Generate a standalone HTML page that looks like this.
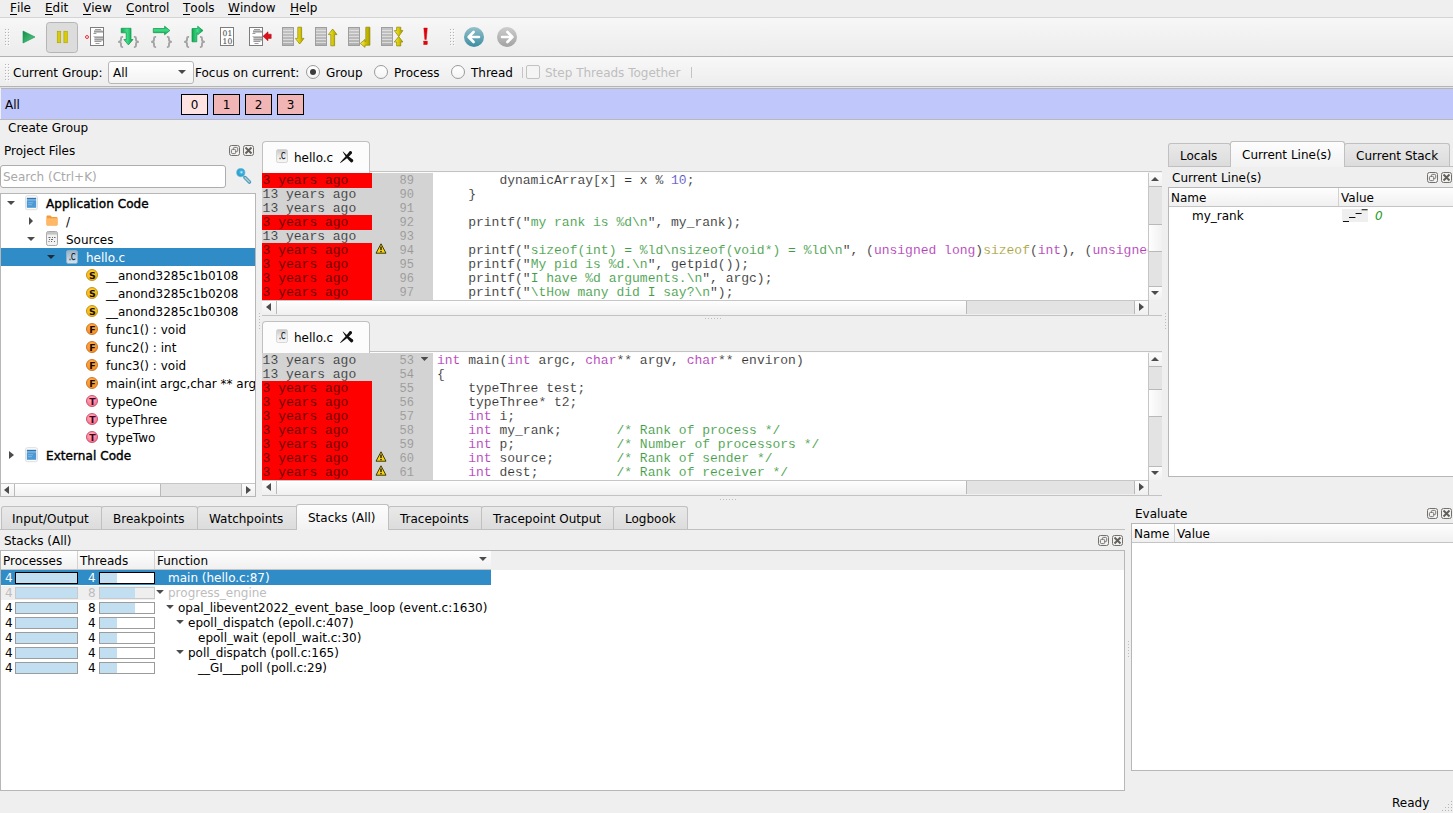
<!DOCTYPE html>
<html lang="en">
<head>
<meta charset="utf-8">
<title>DDT - hello.c</title>
<style>
*{box-sizing:border-box;margin:0;padding:0}
html,body{width:1453px;height:813px;overflow:hidden}
body{position:relative;background:#efefef;color:#000;font:12px "DejaVu Sans","Liberation Sans",sans-serif;-webkit-font-smoothing:antialiased}
.a{position:absolute;white-space:nowrap}
.t{position:absolute;white-space:nowrap;line-height:16px;height:16px}
u{text-decoration:none;border-bottom:1px solid #000;display:inline-block;line-height:12px;height:13px}
/* top bars */
#menubar{left:0;top:0;width:1453px;height:17px;background:#efefef}
#menuline{left:0;top:17px;width:1453px;height:1px;background:#d4d4d4}
#tb1{left:0;top:18px;width:1453px;height:38px;background:linear-gradient(#f7f7f7,#ececec)}
#tb1line{left:0;top:56px;width:1453px;height:1px;background:#b2b2b2}
#tb2{left:0;top:57px;width:1453px;height:29px;background:linear-gradient(#f8f8f8,#ededed)}
#tb2line{left:0;top:86px;width:1453px;height:2px;background:linear-gradient(#b4b4b4 1px,#e2e2e2 1px)}
.grip{position:absolute;width:5px;height:17px;background-image:radial-gradient(circle at 0.5px 0.5px,#b4b4b4 0.6px,transparent 0.7px),radial-gradient(circle at 1.5px 1.5px,#fff 0.6px,transparent 0.7px);background-size:3px 3px}
.icon{position:absolute;overflow:visible}
.radio{position:absolute;width:14px;height:14px;border-radius:50%;border:1px solid #9a9a9a;background:linear-gradient(#fff,#f4f4f4)}
.radio.on::after{content:"";position:absolute;left:3px;top:3px;width:6px;height:6px;border-radius:50%;background:#3c3c3c}
/* group row */
#grouprow{left:1px;top:88px;width:1452px;height:31px;background:#c0c8fb;border-top:1px solid #b4b4b0}
#grouprowline{left:0;top:119px;width:1453px;height:1px;background:#b9b9b9}
.pbox{position:absolute;top:94px;width:27px;height:21px;border:1px solid #000;background:#f2b5b5;text-align:center;line-height:21px;font-size:12px}

/* docks */
.dbtn{position:absolute;width:11px;height:11px;border:1px solid #74716d;border-radius:2.5px;background:#f1f1f1}
.frame{position:absolute;background:#fff;border:1px solid #b7b7b7}
.hdr{position:absolute;height:17px;background:linear-gradient(#fefefe,#f0f0f0);border-bottom:1px solid #c4c4c4}
.hsep{position:absolute;width:1px;background:#d2d2d2}
.sel{position:absolute;background:#308cc6}
.tri-d{position:absolute;width:0;height:0;border-left:4px solid transparent;border-right:4px solid transparent;border-top:4px solid #4b4b4b}
.tri-r{position:absolute;width:0;height:0;border-top:4px solid transparent;border-bottom:4px solid transparent;border-left:5px solid #4b4b4b}
.tri-l{position:absolute;width:0;height:0;border-top:4px solid transparent;border-bottom:4px solid transparent;border-right:5px solid #4b4b4b}
.tri-u{position:absolute;width:0;height:0;border-left:4px solid transparent;border-right:4px solid transparent;border-bottom:4px solid #4b4b4b}
.ad7{position:absolute;width:7.8px;height:4.1px;background:#4b4b4b;clip-path:polygon(0 0,100% 0,50% 100%)}
.fb{-webkit-text-stroke:0.4px #000;letter-spacing:0.07px}
.sym{position:absolute;width:12px;height:12px;border-radius:50%;font:bold 9px "DejaVu Sans","Liberation Sans",sans-serif;text-align:center;line-height:11.6px;color:#1c1000}
.sS{background:radial-gradient(circle at 40% 35%,#ffd84a,#eeb21a);border:1px solid #b98a10}
.sF{background:radial-gradient(circle at 40% 35%,#ffb45a,#f58c22);border:1px solid #c4691a}
.sT{background:radial-gradient(circle at 40% 35%,#ff9cb4,#f0708e);border:1px solid #c0405e}
/* scrollbars */
.sb{position:absolute;background:#e3e3e3}
.sbtn{position:absolute;background:linear-gradient(#fcfcfc,#f0f0f0)}
.sbh{position:absolute;background:linear-gradient(#fefefe,#f1f1f1)}
.sbv{position:absolute;background:linear-gradient(90deg,#fefefe,#f1f1f1)}
/* tabs */
.tab{position:absolute;border:1px solid #c0c0c0;border-bottom:none;border-radius:3px 3px 0 0;background:linear-gradient(#e9e9e9,#dcdcdc)}
.tab.on{background:linear-gradient(#fdfdfd,#f2f2f2)}
.etab{position:absolute;border:1px solid #c0c0c0;border-bottom:none;border-radius:4px 4px 0 0;background:#fcfcfc}
/* code */
.code{position:absolute;white-space:pre;font:13px "Liberation Mono",monospace;line-height:14px;height:14px;color:#333}
.red{position:absolute;left:262px;width:110px;height:15px;background:#ff0000}
.ann{left:262.6px;color:#3c3c3c;-webkit-text-stroke:0.1px #d3d3d3}
.annr{left:262.6px;color:#5a0000;-webkit-text-stroke:0.1px #ff0000}
.ln{left:384px;width:30px;text-align:right;font-size:12px;color:#989898;-webkit-text-stroke:0.1px #d3d3d3}
.src{left:437px;-webkit-text-stroke:0.1px #fff}
.k{color:#b23ab8}.s{color:#3f9d46}.c{color:#3f9d46}.n{color:#5a55c8}.z{color:#a8a23a}
</style>
</head>
<body>
<!-- ===== menu bar ===== -->
<div class="a" id="menubar"></div>
<div class="a" id="menuline"></div>
<div class="t" style="left:10px;top:0px"><u>F</u>ile</div>
<div class="t" style="left:45px;top:0px"><u>E</u>dit</div>
<div class="t" style="left:83px;top:0px"><u>V</u>iew</div>
<div class="t" style="left:126px;top:0px"><u>C</u>ontrol</div>
<div class="t" style="left:183px;top:0px"><u>T</u>ools</div>
<div class="t" style="left:228px;top:0px"><u>W</u>indow</div>
<div class="t" style="left:290px;top:0px"><u>H</u>elp</div>

<!-- ===== toolbar 1 ===== -->
<div class="a" id="tb1"></div>
<div class="a" id="tb1line"></div>
<div class="grip" style="left:5px;top:29px"></div>
<div class="grip" style="left:450px;top:29px"></div>


<svg class="icon" style="left:0;top:18px" width="540" height="38" viewBox="0 18 540 38">
<defs>
<linearGradient id="gG" x1="0" y1="0" x2="1" y2="1"><stop offset="0" stop-color="#0f8f45"/><stop offset="1" stop-color="#5fcf8f"/></linearGradient>
<linearGradient id="gG2" x1="0" y1="0" x2="1" y2="0"><stop offset="0" stop-color="#3fc27a"/><stop offset="1" stop-color="#0f8a42"/></linearGradient>
<linearGradient id="gG3" x1="0" y1="0" x2="1" y2="0"><stop offset="0" stop-color="#12a650"/><stop offset="0.5" stop-color="#3fdc8a"/><stop offset="1" stop-color="#0c9c48"/></linearGradient>
<linearGradient id="gG4" x1="0" y1="0" x2="0" y2="1"><stop offset="0" stop-color="#12a650"/><stop offset="0.45" stop-color="#3fdc8a"/><stop offset="1" stop-color="#0c9c48"/></linearGradient>
<linearGradient id="gY" x1="0" y1="0" x2="1" y2="0"><stop offset="0" stop-color="#f4ec62"/><stop offset="0.45" stop-color="#dace08"/><stop offset="1" stop-color="#a89c00"/></linearGradient>
<linearGradient id="gL" x1="0" y1="0" x2="0" y2="1"><stop offset="0" stop-color="#c6c6c6"/><stop offset="1" stop-color="#b0b0b0"/></linearGradient>
<linearGradient id="gB" x1="0" y1="0" x2="0" y2="1"><stop offset="0" stop-color="#94c0ca"/><stop offset="1" stop-color="#3a8da2"/></linearGradient>
<linearGradient id="gGr" x1="0" y1="0" x2="0" y2="1"><stop offset="0" stop-color="#cdcdcd"/><stop offset="1" stop-color="#a2a2a2"/></linearGradient>
<linearGradient id="gCi" x1="0" y1="0" x2="0" y2="1"><stop offset="0" stop-color="#c6c6c6"/><stop offset="0.55" stop-color="#ececec"/><stop offset="1" stop-color="#f8f8f8"/></linearGradient>
<linearGradient id="gCs" x1="0" y1="0" x2="0" y2="1"><stop offset="0" stop-color="#98b2c6"/><stop offset="1" stop-color="#d2e5f3"/></linearGradient>
<radialGradient id="gS" cx="0.45" cy="0.35" r="0.7"><stop offset="0" stop-color="#ffd23e"/><stop offset="1" stop-color="#f0ae08"/></radialGradient>
<radialGradient id="gF" cx="0.45" cy="0.35" r="0.7"><stop offset="0" stop-color="#ffb052"/><stop offset="1" stop-color="#f88a1c"/></radialGradient>
<radialGradient id="gT" cx="0.45" cy="0.35" r="0.7"><stop offset="0" stop-color="#ffb4c4"/><stop offset="1" stop-color="#f4688a"/></radialGradient>
<g id="doc"><rect x="0.5" y="0.5" width="13" height="18" fill="#fff" stroke="#7d7d7d"/><path d="M5 2.5h6M4 4.5h9M3.4 6.5h3M4.4 10.5h8.6M4.4 12.5h8.6M4.4 14.5h7M5.5 16.5h4" stroke="#9c9c9c" stroke-width="1" fill="none"/><path d="M4 3.5h8.4M4 5.5h9M3.4 9.5h9.6M4.4 11.5h8.6M4.4 13.5h8.6" stroke="#c4c4c4" stroke-width="1" fill="none"/></g>
<g id="list"><rect x="0.5" y="0.5" width="11" height="18" fill="url(#gL)" stroke="#9e9e9e"/><path d="M1 3.5h10M1 6.5h10M1 9.5h10M1 12.5h10M1 15.5h10" stroke="#e6e6e6" stroke-width="0.8"/></g>
<g id="brL"><path d="M5.1 0.9H4.4C3.3 0.9 3 1.5 3 2.4V4.1C3 5.1 2.4 5.7 0.2 5.9C2.4 6.1 3 6.7 3 7.7V9.6C3 10.5 3.3 11.1 4.4 11.1H5.1" fill="none" stroke="#a4a4a4" stroke-width="1.9" stroke-linejoin="miter" stroke-miterlimit="6"/></g>
<g id="brR"><path d="M-0.3 0.9H0.4C1.5 0.9 1.8 1.5 1.8 2.4V4.1C1.8 5.1 2.4 5.7 4.6 5.9C2.4 6.1 1.8 6.7 1.8 7.7V9.6C1.8 10.5 1.5 11.1 0.4 11.1H-0.3" fill="none" stroke="#a4a4a4" stroke-width="1.9" stroke-linejoin="miter" stroke-miterlimit="6"/></g>
</defs>
<!-- play -->
<path d="M23 31L35 37L23 43Z" fill="url(#gG)" stroke="#14904a" stroke-width="0.6"/>
<!-- pause (pressed) -->
<rect x="46.5" y="22.5" width="31" height="30" rx="3" fill="#dcdcdc" stroke="#b5b5b5"/>
<rect x="57.3" y="31.3" width="3.4" height="11.4" fill="#d8cc0a" stroke="#b4a800" stroke-width="0.7"/>
<rect x="63.9" y="31.3" width="3.4" height="11.4" fill="#d8cc0a" stroke="#b4a800" stroke-width="0.7"/>
<!-- run to line -->
<use href="#doc" x="90" y="27"/>
<circle cx="87" cy="37" r="1.5" fill="#ffe6e6" stroke="#e8202a" stroke-width="0.9"/>
<!-- step into -->
<use href="#brL" x="118" y="36"/><use href="#brR" x="134.2" y="36"/>
<path d="M121.2 28.3H131V39.5H133L128.4 44.9L123.9 39.5H126.2V32.8H121.2Z" fill="url(#gG3)" stroke="#0a9646" stroke-width="0.7" stroke-linejoin="round"/>
<!-- step over -->
<use href="#brL" x="151" y="36"/><use href="#brR" x="167.2" y="36"/>
<path d="M153.3 28.5H164.6V26.2L169.9 30.5L164.6 34.8V32.7H153.3Z" fill="url(#gG4)" stroke="#0a9646" stroke-width="0.7" stroke-linejoin="round"/>
<!-- step out -->
<use href="#brL" x="184" y="36"/><use href="#brR" x="200.2" y="36"/>
<path d="M192 41.8V28.5H197.7V26.2L203 30.5L197.7 34.8V32.8H196.8V41.8Z" fill="url(#gG3)" stroke="#0a9646" stroke-width="0.7" stroke-linejoin="round"/>
<!-- binary -->
<rect x="220.5" y="27.5" width="13" height="18" fill="#fff" stroke="#7d7d7d"/>
<text x="227.4" y="35.7" font-family="DejaVu Serif,Liberation Serif,serif" font-size="7.6" fill="#5c5c5c" stroke="#5c5c5c" stroke-width="0.15" text-anchor="middle">01</text>
<text x="227.4" y="43.8" font-family="DejaVu Serif,Liberation Serif,serif" font-size="7.6" fill="#5c5c5c" stroke="#5c5c5c" stroke-width="0.15" text-anchor="middle">10</text>
<!-- doc + red arrow -->
<use href="#doc" x="249" y="27"/>
<path d="M263 36.3L268 31.8V34.2H271.2V38.4H268V40.8Z" fill="#e0101a" stroke="#a60008" stroke-width="0.5"/>
<!-- stack down -->
<use href="#list" x="282" y="27"/>
<path d="M297.8 27.2H301.6V38.4H304L299.7 44L295.3 38.4H297.8Z" fill="url(#gY)" stroke="#8f8400" stroke-width="0.7"/>
<!-- stack up -->
<use href="#list" x="315" y="27"/>
<path d="M330.8 45.8H334.6V34.6H337L332.7 29L328.3 34.6H330.8Z" fill="url(#gY)" stroke="#8f8400" stroke-width="0.7"/>
<!-- stack return -->
<use href="#list" x="348" y="27"/>
<path d="M365.8 27.2H369.9V45.2H365V47.4L360.3 43.4L365 39.4V41.6H365.8Z" fill="url(#gY)" stroke="#8f8400" stroke-width="0.7"/>
<!-- stack in/out -->
<use href="#list" x="381" y="27"/>
<path d="M396.6 27.2H400.8V30.6H402.9L398.7 36.5L394.3 30.6H396.6Z" fill="url(#gY)" stroke="#8f8400" stroke-width="0.7"/>
<path d="M396.6 45.9H400.8V42H402.9L398.7 36.5L394.3 42H396.6Z" fill="url(#gY)" stroke="#8f8400" stroke-width="0.7"/>
<!-- bang -->
<path d="M423.8 28H427.3L426.3 39.6H424.8Z" fill="#e60008" stroke="#c00006" stroke-width="0.4"/><rect x="423.8" y="41.1" width="3.5" height="3.5" fill="#e60008" stroke="#c00006" stroke-width="0.4"/>
<!-- back / forward -->
<circle cx="474" cy="37" r="10" fill="url(#gB)"/>
<path d="M469 37H479M473.6 32L468.6 37L473.6 42" fill="none" stroke="#fff" stroke-width="2.6" stroke-linecap="round" stroke-linejoin="round"/>
<circle cx="507" cy="37" r="10" fill="url(#gGr)"/>
<path d="M502 37H512M507.4 32L512.4 37L507.4 42" fill="none" stroke="#fff" stroke-width="2.6" stroke-linecap="round" stroke-linejoin="round"/>
</svg>

<!-- ===== toolbar 2 ===== -->
<div class="a" id="tb2"></div>
<div class="a" id="tb2line"></div>
<div class="grip" style="left:5px;top:64px"></div>
<div class="t" style="left:13px;top:65px">Current Group:</div>
<div class="a" style="left:108px;top:61px;width:86px;height:23px;border:1px solid #b6b6b6;border-radius:3px;background:linear-gradient(#fff,#f3f3f3)"></div>
<div class="t" style="left:113px;top:65px">All</div>
<div class="a" style="left:178px;top:70px;width:0;height:0;border-left:4px solid transparent;border-right:4px solid transparent;border-top:4px solid #4a4a4a"></div>
<div class="t" style="left:195px;top:65px">Focus on current:</div>
<div class="radio on" style="left:306px;top:65px"></div>
<div class="t" style="left:326px;top:65px">Group</div>
<div class="radio" style="left:374px;top:65px"></div>
<div class="t" style="left:394px;top:65px">Process</div>
<div class="radio" style="left:451px;top:65px"></div>
<div class="t" style="left:471px;top:65px">Thread</div>
<div class="a" style="left:522px;top:67px;width:1px;height:11px;background:#c4c4c4"></div>
<div class="a" style="left:526px;top:65px;width:14px;height:14px;border:1px solid #c2c2c2;border-radius:2px;background:#f4f4f4"></div>
<div class="t" style="left:545px;top:65px;color:#bebebe">Step Threads Together</div>
<div class="a" style="left:691px;top:67px;width:1px;height:11px;background:#c4c4c4"></div>

<!-- ===== group row ===== -->
<div class="a" id="grouprow"></div>
<div class="a" id="grouprowline"></div>
<div class="t" style="left:5px;top:97px">All</div>
<div class="pbox" style="left:181px;background:#ffe3e3">0</div>
<div class="pbox" style="left:213px">1</div>
<div class="pbox" style="left:245px">2</div>
<div class="pbox" style="left:277px">3</div>
<div class="t" style="left:8px;top:120px">Create Group</div>

<!-- ===== Project Files ===== -->
<div class="t" style="left:4px;top:143px">Project Files</div>
<div class="dbtn" style="left:229px;top:145px"></div><div class="dbtn" style="left:243px;top:145px"></div>
<svg class="icon" style="left:229px;top:145px" width="25" height="11" viewBox="0 0 25 11"><rect x="4.4" y="2.4" width="4.3" height="4.2" rx="1.1" fill="none" stroke="#6a6764" stroke-width="0.9"/><rect x="2.4" y="4.4" width="4.3" height="4.2" rx="1.1" fill="#f1f1f1" stroke="#6a6764" stroke-width="0.9"/><path d="M16.5 2.5L22.5 8.5M22.5 2.5L16.5 8.5" stroke="#625f5b" stroke-width="1.9"/></svg>
<div class="a" style="left:0px;top:165px;width:226px;height:23px;border:1px solid #adadad;border-radius:3px;background:#fff"></div>
<div class="t" style="left:3px;top:169px;color:#a9a9a9">Search (Ctrl+K)</div>
<svg class="icon" style="left:235px;top:168px" width="17" height="17" viewBox="0 0 17 17"><defs><radialGradient id="lens" cx="0.58" cy="0.45" r="0.6"><stop offset="0" stop-color="#d8f2fc"/><stop offset="0.35" stop-color="#3fb0dc"/><stop offset="1" stop-color="#1f98c8"/></radialGradient></defs><path d="M8.2 7.6L10 9.4" stroke="#7fc0dc" stroke-width="1.4"/><path d="M10 9.6L14.4 14" stroke="#3f9fc6" stroke-width="3.6" stroke-linecap="round"/><path d="M10.2 9.8L14.2 13.8" stroke="#c9c4c4" stroke-width="1.6" stroke-linecap="round"/><circle cx="5.8" cy="4.6" r="4.1" fill="url(#lens)" stroke="#5fb4d8" stroke-width="0.7"/></svg>
<div class="frame" style="left:0;top:193px;width:256px;height:304px"></div>
<div class="tri-d" style="left:7px;top:201px"></div>
<svg class="icon" style="left:25.4px;top:195.3px" width="13" height="15.4" viewBox="0 0 13 15"><rect x="0.5" y="0.5" width="12" height="14" rx="2" fill="#fdfdfd" stroke="#dedede"/><rect x="1.8" y="2.6" width="9.4" height="1.8" fill="#2a78b6"/><rect x="1.8" y="5" width="9.4" height="7.6" fill="#4e98d4"/><path d="M3 7.5h5M3 9.5h4" stroke="#7bb8ea" stroke-width="1"/></svg>
<div class="t fb" style="left:46px;top:196px">Application Code</div>
<div class="tri-r" style="left:29px;top:217px;border-left-width:4.3px"></div>
<svg class="icon" style="left:46px;top:215px" width="12" height="11" viewBox="0 0 12 11"><path d="M0.5 1.5Q0.5 0.5 1.5 0.5H4.5L6 2H10.5Q11.5 2 11.5 3V9.5Q11.5 10.5 10.5 10.5H1.5Q0.5 10.5 0.5 9.5Z" fill="#f59a3a"/><path d="M0.5 4Q0.5 3.2 1.5 3.2H10.5Q11.5 3.2 11.5 4V9.5Q11.5 10.5 10.5 10.5H1.5Q0.5 10.5 0.5 9.5Z" fill="#ffb866"/></svg>
<div class="t" style="left:66px;top:214px">/</div>
<div class="tri-d" style="left:27px;top:237px"></div>
<svg class="icon" style="left:46px;top:231px" width="12" height="15" viewBox="0 0 12 15"><rect x="0.5" y="0.5" width="11" height="14" rx="1.8" fill="#f2f2f2" stroke="#a8a8a8"/><rect x="1" y="1" width="10" height="2.6" fill="#c4c4c4"/><path d="M2.5 6.5h2M6 6.5h1M8 6.5h1.5M3 8.5h1M5 8.5h2M2.5 10.5h1M5 10.5h1M8 10.5h1" stroke="#6a6a6a" stroke-width="1"/></svg>
<div class="t" style="left:66px;top:232px">Sources</div>
<div class="sel" style="left:1px;top:248px;width:254px;height:18px"></div>
<div class="tri-d" style="left:47px;top:255px;border-top-color:#1d2c38"></div>
<svg class="icon" style="left:66px;top:250px" width="12" height="14" viewBox="0 0 12 14"><rect x="0.5" y="0.5" width="11" height="13" rx="1.8" fill="url(#gCs)" stroke="#8fb0c8"/><text x="2.9" y="10.1" font-family="DejaVu Sans,Liberation Sans,sans-serif" font-size="9" fill="#111" stroke="#111" stroke-width="0.25" textLength="6.4" lengthAdjust="spacingAndGlyphs">.C</text></svg>
<div class="t" style="left:86px;top:250px;color:#fff">hello.c</div>
<svg class="icon" style="left:86px;top:269px" width="12" height="12" viewBox="0 0 12 12"><circle cx="6" cy="6" r="5.55" fill="url(#gS)" stroke="#b88608" stroke-width="0.8"/><text x="6.45" y="9.65" text-anchor="middle" font-family="DejaVu Sans,Liberation Sans,sans-serif" font-weight="bold" font-size="9.4" fill="#1a1000">S</text></svg>
<div class="t" style="left:106px;top:268px">__anond3285c1b0108</div>
<svg class="icon" style="left:86px;top:287px" width="12" height="12" viewBox="0 0 12 12"><circle cx="6" cy="6" r="5.55" fill="url(#gS)" stroke="#b88608" stroke-width="0.8"/><text x="6.45" y="9.65" text-anchor="middle" font-family="DejaVu Sans,Liberation Sans,sans-serif" font-weight="bold" font-size="9.4" fill="#1a1000">S</text></svg>
<div class="t" style="left:106px;top:286px">__anond3285c1b0208</div>
<svg class="icon" style="left:86px;top:305px" width="12" height="12" viewBox="0 0 12 12"><circle cx="6" cy="6" r="5.55" fill="url(#gS)" stroke="#b88608" stroke-width="0.8"/><text x="6.45" y="9.65" text-anchor="middle" font-family="DejaVu Sans,Liberation Sans,sans-serif" font-weight="bold" font-size="9.4" fill="#1a1000">S</text></svg>
<div class="t" style="left:106px;top:304px">__anond3285c1b0308</div>
<svg class="icon" style="left:86px;top:323px" width="12" height="12" viewBox="0 0 12 12"><circle cx="6" cy="6" r="5.55" fill="url(#gF)" stroke="#c06a18" stroke-width="0.8"/><text x="6.45" y="9.65" text-anchor="middle" font-family="DejaVu Sans,Liberation Sans,sans-serif" font-weight="bold" font-size="9.4" fill="#1a0c00">F</text></svg>
<div class="t" style="left:106px;top:322px">func1() : void</div>
<svg class="icon" style="left:86px;top:341px" width="12" height="12" viewBox="0 0 12 12"><circle cx="6" cy="6" r="5.55" fill="url(#gF)" stroke="#c06a18" stroke-width="0.8"/><text x="6.45" y="9.65" text-anchor="middle" font-family="DejaVu Sans,Liberation Sans,sans-serif" font-weight="bold" font-size="9.4" fill="#1a0c00">F</text></svg>
<div class="t" style="left:106px;top:340px">func2() : int</div>
<svg class="icon" style="left:86px;top:359px" width="12" height="12" viewBox="0 0 12 12"><circle cx="6" cy="6" r="5.55" fill="url(#gF)" stroke="#c06a18" stroke-width="0.8"/><text x="6.45" y="9.65" text-anchor="middle" font-family="DejaVu Sans,Liberation Sans,sans-serif" font-weight="bold" font-size="9.4" fill="#1a0c00">F</text></svg>
<div class="t" style="left:106px;top:358px">func3() : void</div>
<svg class="icon" style="left:86px;top:377px" width="12" height="12" viewBox="0 0 12 12"><circle cx="6" cy="6" r="5.55" fill="url(#gF)" stroke="#c06a18" stroke-width="0.8"/><text x="6.45" y="9.65" text-anchor="middle" font-family="DejaVu Sans,Liberation Sans,sans-serif" font-weight="bold" font-size="9.4" fill="#1a0c00">F</text></svg>
<div class="t" style="left:106px;top:376px;width:149px;overflow:hidden">main(int argc,char ** argv,char ** environ) : int</div>
<svg class="icon" style="left:86px;top:395px" width="12" height="12" viewBox="0 0 12 12"><circle cx="6" cy="6" r="5.55" fill="url(#gT)" stroke="#c2405e" stroke-width="0.8"/><text x="6.45" y="9.65" text-anchor="middle" font-family="DejaVu Sans,Liberation Sans,sans-serif" font-weight="bold" font-size="9.4" fill="#4a0018">T</text></svg>
<div class="t" style="left:106px;top:394px">typeOne</div>
<svg class="icon" style="left:86px;top:413px" width="12" height="12" viewBox="0 0 12 12"><circle cx="6" cy="6" r="5.55" fill="url(#gT)" stroke="#c2405e" stroke-width="0.8"/><text x="6.45" y="9.65" text-anchor="middle" font-family="DejaVu Sans,Liberation Sans,sans-serif" font-weight="bold" font-size="9.4" fill="#4a0018">T</text></svg>
<div class="t" style="left:106px;top:412px">typeThree</div>
<svg class="icon" style="left:86px;top:431px" width="12" height="12" viewBox="0 0 12 12"><circle cx="6" cy="6" r="5.55" fill="url(#gT)" stroke="#c2405e" stroke-width="0.8"/><text x="6.45" y="9.65" text-anchor="middle" font-family="DejaVu Sans,Liberation Sans,sans-serif" font-weight="bold" font-size="9.4" fill="#4a0018">T</text></svg>
<div class="t" style="left:106px;top:430px">typeTwo</div>
<div class="tri-r" style="left:9px;top:451px"></div>
<svg class="icon" style="left:25.4px;top:447.3px" width="13" height="15.4" viewBox="0 0 13 15"><rect x="0.5" y="0.5" width="12" height="14" rx="2" fill="#fdfdfd" stroke="#dedede"/><rect x="1.8" y="2.6" width="9.4" height="1.8" fill="#2a78b6"/><rect x="1.8" y="5" width="9.4" height="7.6" fill="#4e98d4"/><path d="M3 7.5h5M3 9.5h4" stroke="#7bb8ea" stroke-width="1"/></svg>
<div class="t fb" style="left:46px;top:448px">External Code</div>
<div class="sb" style="left:1px;top:483px;width:254px;height:13px;border-top:1px solid #c6c6c6"></div>
<div class="sbh" style="left:14px;top:484px;width:147px;height:12px;border-left:1px solid #b9b9b9;border-right:1px solid #b9b9b9"></div>
<div class="sbtn" style="left:1px;top:484px;width:13px;height:12px"></div><div class="tri-l" style="left:4px;top:486px"></div>
<div class="sbtn" style="left:241px;top:484px;width:14px;height:12px;border-left:1px solid #b9b9b9"></div><div class="tri-r" style="left:246px;top:486px"></div>
<!-- ===== editor 1 ===== -->
<div class="a" style="left:262px;top:171px;width:900px;height:1px;background:#c3c3c3"></div>
<div class="a" style="left:262px;top:172px;width:886px;height:1px;background:#fcfcfc"></div>
<div class="etab" style="left:262px;top:141px;width:108px;height:32px"></div>
<svg class="icon" style="left:276px;top:149px" width="12" height="14" viewBox="0 0 12 14"><rect x="0.5" y="0.5" width="11" height="13" rx="1.8" fill="url(#gCi)" stroke="#d6d6d6"/><text x="2.9" y="10.1" font-family="DejaVu Sans,Liberation Sans,sans-serif" font-size="9" fill="#111" stroke="#111" stroke-width="0.25" textLength="6.4" lengthAdjust="spacingAndGlyphs">.C</text></svg>
<div class="t" style="left:294px;top:150px">hello.c</div>
<svg class="icon" style="left:340px;top:151px" width="14" height="12" viewBox="0 0 14 12"><path d="M0 11.7C3.3 8 7 3.6 9.6 0.2C11.2 -0.3 12.6 0.9 11.9 2.4C8.8 5.8 4.8 9.2 0.5 11.9Z" fill="#111"/><path d="M3 0.5C5.6 3.2 9 6 12.9 8.6C13.9 9.8 12.9 11.9 11.1 11.4C8 8.8 5.3 5.2 2.7 0.8Z" fill="#111"/></svg>
<div class="a" style="left:262px;top:173px;width:886px;height:127px;background:#fff"></div>
<div class="a" style="left:262px;top:173px;width:171px;height:127px;background:#d3d3d3"></div>
<div class="red" style="top:173px"></div>
<div class="red" style="top:215px"></div>
<div class="red" style="top:243px"></div>
<div class="red" style="top:257px"></div>
<div class="red" style="top:271px"></div>
<div class="red" style="top:285px"></div>
<div class="code annr" style="top:174px">3 years ago</div>
<div class="code ln" style="top:174px">89</div>
<div class="code src" style="top:174px;width:711px;overflow:hidden">        dynamicArray[x] = x % <span class="n">10</span>;</div>
<div class="code ann" style="top:188px">13 years ago</div>
<div class="code ln" style="top:188px">90</div>
<div class="code src" style="top:188px;width:711px;overflow:hidden">    }</div>
<div class="code ann" style="top:202px">13 years ago</div>
<div class="code ln" style="top:202px">91</div>
<div class="code annr" style="top:216px">3 years ago</div>
<div class="code ln" style="top:216px">92</div>
<div class="code src" style="top:216px;width:711px;overflow:hidden">    printf("<span class="s">my rank is %d\n</span>", my_rank);</div>
<div class="code ann" style="top:230px">13 years ago</div>
<div class="code ln" style="top:230px">93</div>
<div class="code annr" style="top:244px">3 years ago</div>
<div class="code ln" style="top:244px">94</div>
<svg class="icon" style="left:375px;top:243.3px" width="12" height="11" viewBox="0 0 12 11"><path d="M6 0.8L11 10.2H1Z" fill="#f8d010" stroke="#2e2800" stroke-width="0.9" stroke-linejoin="round"/><path d="M6 3.6V7" stroke="#1a1a1a" stroke-width="1.4"/><circle cx="6" cy="8.6" r="0.8" fill="#1a1a1a"/></svg>
<div class="code src" style="top:244px;width:711px;overflow:hidden">    printf("<span class="s">sizeof(int) = %ld\nsizeof(void*) = %ld\n</span>", (<span class="k">unsigned long</span>)<span class="z">sizeof</span>(<span class="k">int</span>), (<span class="k">unsigned long</span>)<span class="z">sizeof</span>(<span class="k">void</span>*));</div>
<div class="code annr" style="top:258px">3 years ago</div>
<div class="code ln" style="top:258px">95</div>
<div class="code src" style="top:258px;width:711px;overflow:hidden">    printf("<span class="s">My pid is %d.\n</span>", getpid());</div>
<div class="code annr" style="top:272px">3 years ago</div>
<div class="code ln" style="top:272px">96</div>
<div class="code src" style="top:272px;width:711px;overflow:hidden">    printf("<span class="s">I have %d arguments.\n</span>", argc);</div>
<div class="code annr" style="top:286px">3 years ago</div>
<div class="code ln" style="top:286px">97</div>
<div class="code src" style="top:286px;width:711px;overflow:hidden">    printf("<span class="s">\tHow many did I say?\n</span>");</div>
<div class="sb" style="left:1148px;top:173px;width:14px;height:127px;border-left:1px solid #c6c6c6"></div>
<div class="sbtn" style="left:1149px;top:173px;width:13px;height:14px;border-bottom:1px solid #b9b9b9"></div><div class="tri-u" style="left:1151px;top:177px"></div>
<div class="sbtn" style="left:1149px;top:286px;width:13px;height:14px;border-top:1px solid #b9b9b9"></div><div class="tri-d" style="left:1151px;top:291px"></div>
<div class="sbv" style="left:1149px;top:224px;width:13px;height:28px;border-top:1px solid #b9b9b9;border-bottom:1px solid #b9b9b9"></div>
<div class="sb" style="left:262px;top:300px;width:886px;height:14px;border-top:1px solid #c6c6c6"></div>
<div class="sbh" style="left:276px;top:301px;width:691px;height:13px;border-left:1px solid #b9b9b9;border-right:1px solid #b9b9b9"></div>
<div class="sbtn" style="left:262px;top:301px;width:14px;height:13px"></div><div class="tri-l" style="left:266px;top:303px"></div>
<div class="sbtn" style="left:1134px;top:301px;width:14px;height:13px;border-left:1px solid #b9b9b9"></div><div class="tri-r" style="left:1139px;top:303px"></div>
<div class="a" style="left:1148px;top:300px;width:1px;height:15px;background:#b9b9b9"></div>
<div class="a" style="left:262px;top:315px;width:900px;height:1px;background:#c3c3c3"></div>
<!-- ===== editor 2 ===== -->
<div class="a" style="left:262px;top:351px;width:900px;height:1px;background:#c3c3c3"></div>
<div class="a" style="left:262px;top:352px;width:886px;height:1px;background:#fcfcfc"></div>
<div class="etab" style="left:262px;top:321px;width:108px;height:32px"></div>
<svg class="icon" style="left:276px;top:329px" width="12" height="14" viewBox="0 0 12 14"><rect x="0.5" y="0.5" width="11" height="13" rx="1.8" fill="url(#gCi)" stroke="#d6d6d6"/><text x="2.9" y="10.1" font-family="DejaVu Sans,Liberation Sans,sans-serif" font-size="9" fill="#111" stroke="#111" stroke-width="0.25" textLength="6.4" lengthAdjust="spacingAndGlyphs">.C</text></svg>
<div class="t" style="left:294px;top:330px">hello.c</div>
<svg class="icon" style="left:340px;top:331px" width="14" height="12" viewBox="0 0 14 12"><path d="M0 11.7C3.3 8 7 3.6 9.6 0.2C11.2 -0.3 12.6 0.9 11.9 2.4C8.8 5.8 4.8 9.2 0.5 11.9Z" fill="#111"/><path d="M3 0.5C5.6 3.2 9 6 12.9 8.6C13.9 9.8 12.9 11.9 11.1 11.4C8 8.8 5.3 5.2 2.7 0.8Z" fill="#111"/></svg>
<div class="a" style="left:262px;top:353px;width:886px;height:127px;background:#fff"></div>
<div class="a" style="left:262px;top:353px;width:171px;height:127px;background:#d3d3d3"></div>
<div class="red" style="top:381px"></div>
<div class="red" style="top:395px"></div>
<div class="red" style="top:409px"></div>
<div class="red" style="top:423px"></div>
<div class="red" style="top:437px"></div>
<div class="red" style="top:451px"></div>
<div class="red" style="top:465px"></div>
<div class="code ann" style="top:354px">13 years ago</div>
<div class="code ln" style="top:354px">53</div>
<div class="code src" style="top:354px;width:711px;overflow:hidden"><span class="k">int</span> main(<span class="k">int</span> argc, <span class="k">char</span>** argv, <span class="k">char</span>** environ)</div>
<div class="code ann" style="top:368px">13 years ago</div>
<div class="code ln" style="top:368px">54</div>
<div class="code src" style="top:368px;width:711px;overflow:hidden">{</div>
<div class="code annr" style="top:382px">3 years ago</div>
<div class="code ln" style="top:382px">55</div>
<div class="code src" style="top:382px;width:711px;overflow:hidden">    typeThree test;</div>
<div class="code annr" style="top:396px">3 years ago</div>
<div class="code ln" style="top:396px">56</div>
<div class="code src" style="top:396px;width:711px;overflow:hidden">    typeThree* t2;</div>
<div class="code annr" style="top:410px">3 years ago</div>
<div class="code ln" style="top:410px">57</div>
<div class="code src" style="top:410px;width:711px;overflow:hidden">    <span class="k">int</span> i;</div>
<div class="code annr" style="top:424px">3 years ago</div>
<div class="code ln" style="top:424px">58</div>
<div class="code src" style="top:424px;width:711px;overflow:hidden">    <span class="k">int</span> my_rank;       <span class="c">/* Rank of process */</span></div>
<div class="code annr" style="top:438px">3 years ago</div>
<div class="code ln" style="top:438px">59</div>
<div class="code src" style="top:438px;width:711px;overflow:hidden">    <span class="k">int</span> p;             <span class="c">/* Number of processors */</span></div>
<div class="code annr" style="top:452px">3 years ago</div>
<div class="code ln" style="top:452px">60</div>
<svg class="icon" style="left:375px;top:451.3px" width="12" height="11" viewBox="0 0 12 11"><path d="M6 0.8L11 10.2H1Z" fill="#f8d010" stroke="#2e2800" stroke-width="0.9" stroke-linejoin="round"/><path d="M6 3.6V7" stroke="#1a1a1a" stroke-width="1.4"/><circle cx="6" cy="8.6" r="0.8" fill="#1a1a1a"/></svg>
<div class="code src" style="top:452px;width:711px;overflow:hidden">    <span class="k">int</span> source;        <span class="c">/* Rank of sender */</span></div>
<div class="code annr" style="top:466px">3 years ago</div>
<div class="code ln" style="top:466px">61</div>
<svg class="icon" style="left:375px;top:465.3px" width="12" height="11" viewBox="0 0 12 11"><path d="M6 0.8L11 10.2H1Z" fill="#f8d010" stroke="#2e2800" stroke-width="0.9" stroke-linejoin="round"/><path d="M6 3.6V7" stroke="#1a1a1a" stroke-width="1.4"/><circle cx="6" cy="8.6" r="0.8" fill="#1a1a1a"/></svg>
<div class="code src" style="top:466px;width:711px;overflow:hidden">    <span class="k">int</span> dest;          <span class="c">/* Rank of receiver */</span></div>
<div class="ad7" style="left:420.6px;top:357px"></div>
<div class="sb" style="left:1148px;top:353px;width:14px;height:127px;border-left:1px solid #c6c6c6"></div>
<div class="sbtn" style="left:1149px;top:353px;width:13px;height:14px;border-bottom:1px solid #b9b9b9"></div><div class="tri-u" style="left:1151px;top:357px"></div>
<div class="sbtn" style="left:1149px;top:466px;width:13px;height:14px;border-top:1px solid #b9b9b9"></div><div class="tri-d" style="left:1151px;top:471px"></div>
<div class="sbv" style="left:1149px;top:389px;width:13px;height:28px;border-top:1px solid #b9b9b9;border-bottom:1px solid #b9b9b9"></div>
<div class="sb" style="left:262px;top:480px;width:886px;height:14px;border-top:1px solid #c6c6c6"></div>
<div class="sbh" style="left:276px;top:481px;width:691px;height:13px;border-left:1px solid #b9b9b9;border-right:1px solid #b9b9b9"></div>
<div class="sbtn" style="left:262px;top:481px;width:14px;height:13px"></div><div class="tri-l" style="left:266px;top:483px"></div>
<div class="sbtn" style="left:1134px;top:481px;width:14px;height:13px;border-left:1px solid #b9b9b9"></div><div class="tri-r" style="left:1139px;top:483px"></div>
<div class="a" style="left:1148px;top:480px;width:1px;height:15px;background:#b9b9b9"></div>
<div class="a" style="left:262px;top:495px;width:900px;height:1px;background:#c3c3c3"></div>
<!-- ===== right dock ===== -->
<div class="a" style="left:1168px;top:166px;width:285px;height:1px;background:#c0c0c0"></div>
<div class="tab" style="left:1168px;top:143px;width:63px;height:23px"></div><div class="t" style="left:1180px;top:148px">Locals</div>
<div class="tab" style="left:1344px;top:143px;width:106px;height:23px"></div><div class="t" style="left:1356px;top:148px">Current Stack</div>
<div class="tab on" style="left:1230px;top:141px;width:115px;height:26px"></div><div class="t" style="left:1242px;top:147px">Current Line(s)</div>
<div class="t" style="left:1172px;top:170px">Current Line(s)</div>
<div class="dbtn" style="left:1427px;top:172px"></div><div class="dbtn" style="left:1441px;top:172px"></div><svg class="icon" style="left:1427px;top:172px" width="25" height="11" viewBox="0 0 25 11"><rect x="4.4" y="2.4" width="4.3" height="4.2" rx="1.1" fill="none" stroke="#6a6764" stroke-width="0.9"/><rect x="2.4" y="4.4" width="4.3" height="4.2" rx="1.1" fill="#f1f1f1" stroke="#6a6764" stroke-width="0.9"/><path d="M16.5 2.5L22.5 8.5M22.5 2.5L16.5 8.5" stroke="#625f5b" stroke-width="1.9"/></svg>
<div class="frame" style="left:1168px;top:187px;width:290px;height:290px"></div>
<div class="hdr" style="left:1169px;top:188px;width:284px;height:19px"></div>
<div class="hsep" style="left:1338px;top:188px;height:18px"></div>
<div class="t" style="left:1171px;top:190px">Name</div><div class="t" style="left:1341px;top:190px">Value</div>
<div class="t" style="left:1192px;top:208px">my_rank</div>
<div class="a" style="left:1342px;top:209px;width:26px;height:13px;background:#efefef"></div>
<svg class="icon" style="left:1342px;top:209px" width="26" height="13" viewBox="0 0 26 13"><path d="M1 12.5h6M7 8.5h6.4M13.6 4.5h6M19.6 0.8h6" stroke="#111" stroke-width="1.1"/></svg>
<div class="t" style="left:1375px;top:208px;color:#1f9a1f;font-style:italic">0</div>
<!-- ===== bottom tabs / stacks ===== -->
<div class="a" style="left:0;top:529px;width:1125px;height:1px;background:#c0c0c0"></div>
<div class="tab" style="left:1px;top:506px;width:102px;height:23px"></div><div class="t" style="left:12px;top:511px">Input/Output</div>
<div class="tab" style="left:101px;top:506px;width:97px;height:23px"></div><div class="t" style="left:113px;top:511px">Breakpoints</div>
<div class="tab" style="left:197px;top:506px;width:101px;height:23px"></div><div class="t" style="left:209px;top:511px">Watchpoints</div>
<div class="tab" style="left:388px;top:506px;width:95px;height:23px"></div><div class="t" style="left:400px;top:511px">Tracepoints</div>
<div class="tab" style="left:481px;top:506px;width:134px;height:23px"></div><div class="t" style="left:493px;top:511px">Tracepoint Output</div>
<div class="tab" style="left:613px;top:506px;width:75px;height:23px"></div><div class="t" style="left:625px;top:511px">Logbook</div>
<div class="tab on" style="left:296px;top:504px;width:93px;height:26px"></div><div class="t" style="left:308px;top:510px">Stacks (All)</div>
<div class="t" style="left:4px;top:533px">Stacks (All)</div>
<div class="dbtn" style="left:1098px;top:535px"></div><div class="dbtn" style="left:1112px;top:535px"></div><svg class="icon" style="left:1098px;top:535px" width="25" height="11" viewBox="0 0 25 11"><rect x="4.4" y="2.4" width="4.3" height="4.2" rx="1.1" fill="none" stroke="#6a6764" stroke-width="0.9"/><rect x="2.4" y="4.4" width="4.3" height="4.2" rx="1.1" fill="#f1f1f1" stroke="#6a6764" stroke-width="0.9"/><path d="M16.5 2.5L22.5 8.5M22.5 2.5L16.5 8.5" stroke="#625f5b" stroke-width="1.9"/></svg>
<div class="frame" style="left:0;top:550px;width:1125px;height:241px"></div>
<div class="a" style="left:1px;top:551px;width:1123px;height:19px;background:#efefef"></div>
<div class="hdr" style="left:1px;top:551px;width:490px;height:19px"></div>
<div class="hsep" style="left:77px;top:551px;height:18px"></div><div class="hsep" style="left:154px;top:551px;height:18px"></div>
<div class="t" style="left:3px;top:553px">Processes</div><div class="t" style="left:80px;top:553px">Threads</div><div class="t" style="left:157px;top:553px">Function</div>
<div class="ad7" style="left:479px;top:557px"></div>
<div class="sel" style="left:1px;top:570px;width:490px;height:15px"></div>
<div class="t" style="left:5px;top:570px;color:#fff">4</div>
<div class="a" style="left:15px;top:572px;width:63px;height:12px;border:1px solid #000;background:#c2dff2"></div>
<div class="t" style="left:88px;top:570px;color:#fff">4</div>
<div class="a" style="left:99px;top:572px;width:56px;height:12px;border:1px solid #000;background:linear-gradient(90deg,#c2dff2 17px,#fff 17px)"></div>
<div class="t" style="left:168px;top:570px;color:#fff">main (hello.c:87)</div>
<div class="a" style="left:1px;top:586px;width:154px;height:14px;background:#efefef"></div>
<div class="t" style="left:5px;top:585px;color:#bdbdbd">4</div>
<div class="a" style="left:15px;top:587px;width:63px;height:12px;border:1px solid #c9c9c9;background:#c2dff2"></div>
<div class="t" style="left:88px;top:585px;color:#bdbdbd">8</div>
<div class="a" style="left:99px;top:587px;width:56px;height:12px;border:1px solid #c9c9c9;background:linear-gradient(90deg,#c2dff2 35px,#efefef 35px)"></div>
<div class="ad7" style="left:156.1px;top:590.0px"></div>
<div class="t" style="left:168px;top:585px;color:#bdbdbd">progress_engine</div>
<div class="t" style="left:5px;top:600px;color:#000">4</div>
<div class="a" style="left:15px;top:602px;width:63px;height:12px;border:1px solid #9c9c9c;background:#c2dff2"></div>
<div class="t" style="left:88px;top:600px;color:#000">8</div>
<div class="a" style="left:99px;top:602px;width:56px;height:12px;border:1px solid #9c9c9c;background:linear-gradient(90deg,#c2dff2 35px,#fff 35px)"></div>
<div class="ad7" style="left:166.1px;top:605.0px"></div>
<div class="t" style="left:178px;top:600px;color:#000">opal_libevent2022_event_base_loop (event.c:1630)</div>
<div class="t" style="left:5px;top:615px;color:#000">4</div>
<div class="a" style="left:15px;top:617px;width:63px;height:12px;border:1px solid #9c9c9c;background:#c2dff2"></div>
<div class="t" style="left:88px;top:615px;color:#000">4</div>
<div class="a" style="left:99px;top:617px;width:56px;height:12px;border:1px solid #9c9c9c;background:linear-gradient(90deg,#c2dff2 17px,#fff 17px)"></div>
<div class="ad7" style="left:176.1px;top:620.0px"></div>
<div class="t" style="left:188px;top:615px;color:#000">epoll_dispatch (epoll.c:407)</div>
<div class="t" style="left:5px;top:630px;color:#000">4</div>
<div class="a" style="left:15px;top:632px;width:63px;height:12px;border:1px solid #9c9c9c;background:#c2dff2"></div>
<div class="t" style="left:88px;top:630px;color:#000">4</div>
<div class="a" style="left:99px;top:632px;width:56px;height:12px;border:1px solid #9c9c9c;background:linear-gradient(90deg,#c2dff2 17px,#fff 17px)"></div>
<div class="t" style="left:198px;top:630px;color:#000">epoll_wait (epoll_wait.c:30)</div>
<div class="t" style="left:5px;top:645px;color:#000">4</div>
<div class="a" style="left:15px;top:647px;width:63px;height:12px;border:1px solid #9c9c9c;background:#c2dff2"></div>
<div class="t" style="left:88px;top:645px;color:#000">4</div>
<div class="a" style="left:99px;top:647px;width:56px;height:12px;border:1px solid #9c9c9c;background:linear-gradient(90deg,#c2dff2 17px,#fff 17px)"></div>
<div class="ad7" style="left:176.1px;top:650.0px"></div>
<div class="t" style="left:188px;top:645px;color:#000">poll_dispatch (poll.c:165)</div>
<div class="t" style="left:5px;top:660px;color:#000">4</div>
<div class="a" style="left:15px;top:662px;width:63px;height:12px;border:1px solid #9c9c9c;background:#c2dff2"></div>
<div class="t" style="left:88px;top:660px;color:#000">4</div>
<div class="a" style="left:99px;top:662px;width:56px;height:12px;border:1px solid #9c9c9c;background:linear-gradient(90deg,#c2dff2 17px,#fff 17px)"></div>
<div class="t" style="left:198px;top:660px;color:#000">__GI___poll (poll.c:29)</div>
<!-- ===== evaluate ===== -->
<div class="t" style="left:1135px;top:506px">Evaluate</div>
<div class="dbtn" style="left:1427px;top:508px"></div><div class="dbtn" style="left:1441px;top:508px"></div><svg class="icon" style="left:1427px;top:508px" width="25" height="11" viewBox="0 0 25 11"><rect x="4.4" y="2.4" width="4.3" height="4.2" rx="1.1" fill="none" stroke="#6a6764" stroke-width="0.9"/><rect x="2.4" y="4.4" width="4.3" height="4.2" rx="1.1" fill="#f1f1f1" stroke="#6a6764" stroke-width="0.9"/><path d="M16.5 2.5L22.5 8.5M22.5 2.5L16.5 8.5" stroke="#625f5b" stroke-width="1.9"/></svg>
<div class="frame" style="left:1131px;top:523px;width:330px;height:248px"></div>
<div class="hdr" style="left:1132px;top:524px;width:321px;height:19px"></div>
<div class="hsep" style="left:1174px;top:524px;height:18px"></div>
<div class="t" style="left:1134px;top:526px">Name</div><div class="t" style="left:1177px;top:526px">Value</div>
<!-- ===== status bar ===== -->
<div class="t" style="left:1392px;top:795px">Ready</div>
<svg class="icon" style="left:1441px;top:800px" width="13" height="13" viewBox="0 0 13 13"><g fill="#b5b5b5"><rect x="10" y="1" width="1" height="1"/><rect x="7" y="4" width="1" height="1"/><rect x="10" y="4" width="1" height="1"/><rect x="4" y="7" width="1" height="1"/><rect x="7" y="7" width="1" height="1"/><rect x="10" y="7" width="1" height="1"/><rect x="1" y="10" width="1" height="1"/><rect x="4" y="10" width="1" height="1"/><rect x="7" y="10" width="1" height="1"/><rect x="10" y="10" width="1" height="1"/></g></svg>
<div class="a" style="left:705px;top:318px;width:16px;height:1px;background-image:linear-gradient(90deg,#bdbdbd 1px,transparent 1px);background-size:3px 1px"></div>
<div class="a" style="left:720px;top:499px;width:16px;height:1px;background-image:linear-gradient(90deg,#bdbdbd 1px,transparent 1px);background-size:3px 1px"></div>
<div class="a" style="left:259px;top:313px;width:1px;height:16px;background-image:linear-gradient(#bdbdbd 1px,transparent 1px);background-size:1px 3px"></div>
<div class="a" style="left:1165px;top:313px;width:1px;height:16px;background-image:linear-gradient(#bdbdbd 1px,transparent 1px);background-size:1px 3px"></div>
<div class="a" style="left:1128px;top:641px;width:1px;height:16px;background-image:linear-gradient(#bdbdbd 1px,transparent 1px);background-size:1px 3px"></div>
</body>
</html>
